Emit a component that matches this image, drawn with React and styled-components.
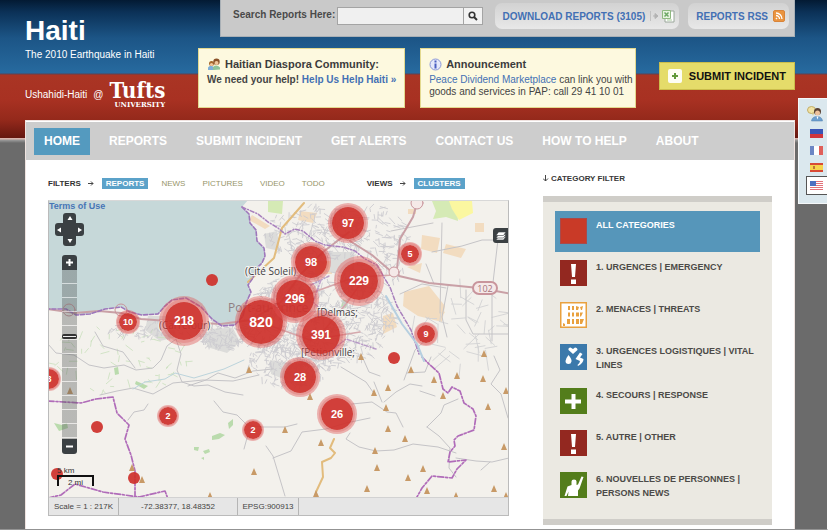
import React, { useState } from "react";
import styled, { createGlobalStyle } from "styled-components";

const GlobalStyle = createGlobalStyle`
  * { box-sizing: border-box; }
  body { margin: 0; font-family: "Liberation Sans", Arial, sans-serif; color: #3b3b3b; }
  button, input { font-family: inherit; }
  a { text-decoration: none; color: inherit; }
  h1, h2, p, ul { margin: 0; padding: 0; }
  ul { list-style: none; }
  svg { display: block; flex: none; }
`;

const Page = styled.div`
  position: relative;
  display: flex;
  flex-direction: column;
  min-height: 100vh;
  padding: 0 32px 0 25px;
  overflow: hidden;
  border-right: 1px solid #fff;
  border-bottom: 1px solid #939393;
  background:
    linear-gradient(#031a33 0, #0b3157 12px, #1c5586 38px, #276a9f 73px, #5c4152 74px, #aa3524 75px,
      #a83122 100px, #94291b 120px, #651710 138px, #d9b4ae 138px, #d9b4ae 139px, #9b9b9b 140px, #6b6b6b 143px);
`;

const Header = styled.header`
  display: flex;
  height: 120px;
`;

const Brand = styled.div`
  flex: 0 0 173px;
  padding-top: 15px;
  color: #fff;
`;

const Title = styled.h1`
  font-size: 28px;
  line-height: 32px;
`;

const Tagline = styled.p`
  font-size: 10px;
  line-height: 15px;
`;

const Partner = styled.div`
  display: flex;
  align-items: center;
  gap: 6px;
  margin-top: 17px;
  font-size: 10px;
`;

const Logo = styled.a`
  display: flex;
  flex-direction: column;
  align-items: flex-end;
  font-family: "DejaVu Serif Condensed", "DejaVu Serif", serif;
  font-weight: bold;
  font-size: 22px;
  line-height: 22px;
`;

const LogoSub = styled.span`
  font-family: "DejaVu Serif", serif;
  font-size: 7px;
  line-height: 8px;
`;

const HeaderSide = styled.div`
  flex: 1;
  min-width: 0;
`;

const Toolbar = styled.form`
  display: flex;
  align-items: flex-start;
  height: 37px;
  margin-left: 22px;
  padding: 3px 5px 0 12px;
  background: #c9c9c9;
  border: 1px solid #a9b0b6;
  border-top: 0;
`;

const SearchLabel = styled.label`
  margin-right: 2px;
  font-size: 10px;
  font-weight: bold;
  line-height: 24px;
  color: #4a4a4a;
  white-space: nowrap;
`;

const SearchInput = styled.input`
  flex: 1;
  min-width: 0;
  height: 18px;
  margin-top: 4px;
  padding: 0 4px;
  font-size: 10px;
  background: #f0f0f0;
  border: 1px solid #a4a4a4;
  border-radius: 0;
`;

const SearchButton = styled.button`
  display: grid;
  place-items: center;
  width: 20px;
  height: 18px;
  margin: 4px 12px 0 -1px;
  padding: 0;
  background: #f2f2f2;
  border: 1px solid #a4a4a4;
`;

const Pill = styled.a`
  display: flex;
  align-items: center;
  gap: 5px;
  height: 26px;
  padding: 0 4px 0 8px;
  font-size: 10px;
  font-weight: bold;
  color: #4370b4;
  white-space: nowrap;
  background: linear-gradient(#d2d2d2, #e8e8e8);
  border-radius: 7px;
  & + & { margin-left: 9px; }
`;

const Notices = styled.div`
  display: flex;
  align-items: flex-start;
  gap: 15px;
  margin-top: 11px;
`;

const Notice = styled.section`
  flex: ${(p) => p.$grow} 1 0;
  height: 60px;
  padding: 7px 0 0 8px;
  background: #fdf9df;
  border: 1px solid #e3d98f;
  font-size: 10px;
  line-height: 12px;
  color: #444;
  white-space: nowrap;
  font-weight: ${(p) => (p.$strong ? "bold" : "normal")};
  a { color: #4370b4; }
`;

const NoticeTitle = styled.h2`
  display: flex;
  align-items: center;
  gap: 4px;
  margin-bottom: 2px;
  font-size: 11px;
  line-height: 16px;
  color: #3c3c3c;
`;

const SubmitLink = styled.a`
  display: flex;
  align-items: center;
  gap: 7px;
  height: 28px;
  margin: 14px 0 0 8px;
  padding: 0 8px;
  font-size: 11px;
  font-weight: bold;
  color: #111;
  white-space: nowrap;
  background: #e5dc6a;
  border: 1px solid #cbbd4c;
`;

const Panel = styled.main`
  flex: 1;
  background: #fff;
  border: 1px solid #efe3e0;
  border-bottom: 0;
  padding-top: 1px;
`;

const Nav = styled.nav`
  display: flex;
  align-items: center;
  gap: 9px;
  height: 38px;
  padding-left: 8px;
  background: #cdcdcd;
`;

const NavItem = styled.a`
  padding: 0 10px;
  font-size: 12px;
  font-weight: bold;
  line-height: 27px;
  color: #fff;
  white-space: nowrap;
  background: ${(p) => (p.$active ? "#549abf" : "transparent")};
`;

const Columns = styled.div`
  display: grid;
  grid-template-columns: minmax(0, 1fr) 229px;
  gap: 34px;
  padding: 12px 22px 4px;
`;

const Filters = styled.div`
  display: flex;
  align-items: center;
  height: 22px;
  margin-bottom: 6px;
  font-size: 8px;
`;

const FilterLabel = styled.span`
  display: flex;
  align-items: center;
  gap: 7px;
  margin: 0 8px 0 ${(p) => (p.$spaced ? "29px" : "0")};
  font-weight: bold;
  color: #333;
`;

const FilterButton = styled.button`
  height: 11px;
  margin-right: 9px;
  padding: 0 4px;
  border: 0;
  font-size: 8px;
  line-height: 11px;
  font-weight: ${(p) => (p.$active ? "bold" : "normal")};
  color: ${(p) => (p.$active ? "#fff" : "#98966a")};
  background: ${(p) => (p.$active ? "#5ba2c9" : "transparent")};
`;

const MapBox = styled.section`
  border: 1px solid #bbb;
  border-top-color: #d8d8d8;
`;

const MapView = styled.div`
  position: relative;
  height: 296px;
  overflow: hidden;
  background: #f3f1ec;
`;

const Terms = styled.a`
  position: absolute;
  left: 0;
  top: 0;
  font-size: 9px;
  line-height: 10px;
  color: #4675b6;
  font-weight: bold;
`;

const Marker = styled.button`
  position: absolute;
  left: ${(p) => p.$x - 49 - p.$r}px;
  top: ${(p) => p.$y - 201 - p.$r}px;
  width: ${(p) => p.$r * 2}px;
  height: ${(p) => p.$r * 2}px;
  padding: 0;
  border: 0;
  border-radius: 50%;
  background: rgba(206, 48, 42, 0.92);
  box-shadow: 0 0 0 ${(p) => Math.ceil(p.$halo / 2)}px rgba(216, 70, 70, 0.25),
    0 0 0 ${(p) => p.$halo}px rgba(222, 80, 80, 0.4);
  font-size: ${(p) => (p.$r > 20 ? 14 : p.$r > 17 ? 12 : p.$r > 12 ? 11 : 9)}px;
  font-weight: bold;
  color: #fff;
`;

const Controls = styled.div`
  position: absolute;
  left: 6px;
  top: 12px;
  width: 29px;
  display: flex;
  flex-direction: column;
  align-items: center;
`;

const PanPad = styled.div`
  display: grid;
  grid-template-columns: 8px 13px 8px;
  grid-template-rows: 10px 13px 10px;
  margin-bottom: 9px;
`;

const PanButton = styled.button`
  display: grid;
  place-items: center;
  grid-area: ${(p) => p.$area};
  padding: 0;
  border: 0;
  background: #3b4043;
  border-radius: ${(p) => p.$radius};
`;

const PanCenter = styled.span`
  grid-area: 2 / 2;
  background: #3b4043;
`;

const ZoomButton = styled.button`
  display: grid;
  place-items: center;
  width: 15px;
  height: 15px;
  padding: 0;
  border: 0;
  color: #fff;
  background: #3b4043;
  border-radius: ${(p) => (p.$end ? "0 0 3px 3px" : "3px 3px 0 0")};
`;

const ZoomTrack = styled.div`
  width: 15px;
  height: 169px;
  padding-top: 64px;
  background: repeating-linear-gradient(rgba(80, 85, 85, 0.36) 0 13px, rgba(225, 225, 225, 0.6) 13px 14px);
`;

const ZoomHandle = styled.div`
  height: 5px;
  border: 1px solid #333;
  border-width: 2px 1px;
  border-radius: 2px;
  background: #eee;
`;

const LayerButton = styled.button`
  position: absolute;
  right: 0;
  top: 27px;
  display: grid;
  place-items: center;
  width: 15px;
  height: 15px;
  padding: 0;
  border: 0;
  border-radius: 3px 0 0 3px;
  background: #3b4043;
`;

const Scale = styled.div`
  position: absolute;
  left: 8px;
  bottom: 11px;
  width: 37px;
  font-size: 8px;
  line-height: 9px;
  color: #333;
`;

const ScaleBar = styled.div`
  height: 11px;
  padding-top: 1px;
  text-align: center;
  border: 2px solid #111;
  border-bottom: 0;
`;

const StatusBar = styled.footer`
  display: flex;
  height: 18px;
  border-top: 1px solid #d2d2d2;
  background: #e6e6e6;
  font-size: 8px;
  line-height: 18px;
  color: #444;
`;

const StatusCell = styled.span`
  flex: 0 0 ${(p) => p.$width}px;
  text-align: center;
  white-space: nowrap;
  border-right: 1px solid #b5b5b5;
`;

const CategoryTitle = styled.h2`
  height: 24px;
  display: flex;
  align-items: flex-start;
  gap: 2px;
  padding-top: 1px;
  font-size: 8px;
  line-height: 11px;
  color: #383838;
  svg { margin-top: 2px; }
`;

const CategoryList = styled.ul`
  display: flex;
  flex-direction: column;
  gap: 1px;
  padding: 9px 12px 11px;
  background: #ebe9e2;
  border: solid #cfcdc8;
  border-width: 6px 0;
`;

const CategoryButton = styled.button`
  display: flex;
  align-items: flex-start;
  gap: 9px;
  width: 100%;
  padding: 7px 5px 8px;
  border: 0;
  text-align: left;
  font-size: 9px;
  font-weight: bold;
  line-height: 14px;
  color: ${(p) => (p.$active ? "#fff" : "#4c4a47")};
  background: ${(p) => (p.$active ? "#5696ba" : "transparent")};
`;

const LanguageBar = styled.aside`
  position: absolute;
  right: 0;
  top: 98px;
  display: flex;
  flex-direction: column;
  align-items: flex-end;
  width: 29px;
  padding: 6px 0 8px;
  background: #dbe8ee;
  border: 1px solid #f5f8fa;
  border-right: 0;
`;

const LanguageIcon = styled.div`
  padding: 0 4px 3px 0;
`;

const Language = styled.button`
  display: flex;
  align-items: center;
  width: 21px;
  height: ${(p) => (p.$active ? 19 : 17)}px;
  padding: 0 0 0 3px;
  border: ${(p) => (p.$active ? "1px solid #555" : "1px solid transparent")};
  border-right: 0;
  background: ${(p) => (p.$active ? "#fff" : "transparent")};
`;

function seeded(seed) {
  let s = seed;
  return () => {
    s = (s * 16807) % 2147483647;
    return s / 2147483647;
  };
}

/* Short crossing street segments scattered inside an ellipse. */
function streets(seed, cx, cy, rx, ry, count, len) {
  const rnd = seeded(seed);
  let d = "";
  for (let i = 0; i < count; i++) {
    const a = rnd() * Math.PI * 2;
    const m = Math.sqrt(rnd());
    const x = cx + Math.cos(a) * rx * m;
    const y = cy + Math.sin(a) * ry * m;
    const t = 0.3 + (rnd() > 0.5 ? Math.PI / 2 : 0) + (rnd() - 0.5) * 1.2;
    const l = len * (0.4 + rnd());
    d += `M${x.toFixed(1)} ${y.toFixed(1)}l${(Math.cos(t) * l).toFixed(1)} ${(Math.sin(t) * l).toFixed(1)}`;
  }
  return d;
}

const URBAN = [
  streets(7, 318, 318, 76, 48, 820, 6),
  streets(19, 315, 232, 50, 28, 250, 6),
  streets(31, 290, 362, 42, 26, 220, 5),
  streets(43, 375, 245, 34, 42, 170, 6),
  streets(53, 222, 334, 26, 16, 140, 5),
  streets(61, 150, 328, 42, 9, 70, 5),
].join("");
const FIELDS = streets(77, 120, 358, 75, 34, 70, 6);
const EAST = streets(89, 460, 320, 48, 45, 46, 15);

const PEAKS = [
  [285, 430], [310, 397], [321, 443], [374, 393], [388, 388], [386, 408], [388, 429], [405, 439], [375, 451],
  [377, 468], [408, 478], [423, 469], [427, 491], [367, 489], [316, 494], [411, 370], [434, 380], [457, 376],
  [443, 396], [483, 379], [488, 407], [506, 391], [504, 447], [494, 489], [456, 496], [361, 357], [484, 354],
  [506, 496], [249, 370], [70, 391], [254, 472], [142, 480], [132, 468], [210, 496],
];

const MapSvg = styled.svg`
  font-family: "Open Sans", "Noto Sans", sans-serif;
`;

const COAST =
  "M242 207L249 214L250 223L256 230L257 241L264 248L265 256L262 263L255 270L253 278L248 285L251 292L246 303L243 316L235 325L222 326L212 319L201 307L186 298L172 300L164 307L158 314L142 315L130 312L121 307L105 309L90 314L76 315L66 309L48 309";

function MapArt() {
  return (
    <MapSvg width="459" height="296" viewBox="49 201 459 296" aria-hidden="true">
      <rect x="48" y="200" width="800" height="300" fill="#f3f1ec" />
      <path d={COAST + "V200H248L242 207Z"} fill="#c6d8d9" />
      <path d="M268 201H283L282 214L268 212Z M432 201H450L457 206L458 221L446 217L433 219L436 211Z" fill="#d5eab5" />
      <path d="M449 201H472L473 213L459 220L452 209Z" fill="#fbf7a0" />
      <path
        d="M252 215L270 226L265 229L249 220ZM300 211l17 2-4 10-15-3zM475 223h9v9h-9zM422 235l18 3-3 15-16-4zM446 244l20 5-5 9-18-5zM407 267l15-4-2 10zM404 292l25-6 16 20-3 16-24-6-15-10zM383 316l10-3 4 14-14 7zM440 309l5 3-5 8zM315 261h17v13h-17zM408 209h8v5h-8z"
        fill="#f2dcc0"
      />
      <g fill="#dcdcda">
        <path d="M148 316h22l7 21-17 4-15-11zM205 329l28-1 7 14-13 11-20-6zM264 234l13-3 3 20-14-3zM297 246l13 2-5 13-12-3zM330 252h24v20h-24zM270 360l30 4 14 14-18 6-25-10z" />
      </g>
      <g fill="#badbad">
        <path d="M212 436l8-3 5 2-6 4-7 1zM228 423l5-4 0 6-4 4zM194 447h5l-1 4-4-1zM203 451l6-2 1 3-5 2zM201 458l3-1v3zM54 423l8 2 5-2 1 5-9 3zM114 368l4-1 1 7-4 1zM136 381l12 5-4 3-9-5zM343 299l5 3-2 6-5-1z" />
      </g>
      <g fill="none" strokeLinecap="round" strokeLinejoin="round">
        <path d={FIELDS} stroke="#c9dfbc" strokeWidth="0.8" />
        <path d={URBAN} stroke="#cdccd0" strokeWidth="0.9" />
        <path d={EAST} stroke="#d3d2d4" strokeWidth="0.9" />
        <path
          stroke="#c5c4c7"
          strokeWidth="1"
          d="M48 344l8 9 18 2 15 10 15 3 20-3 12 5 17-2 8-8 6-14 9-7 5 15-4 16 5 12 12 4 14-1 17 7 18 3M95 332l8 14 20 6 12 16M188 386l18-6 12-7 17 5 18-7 20-2M100 395l17-4 16-3 20 6 20-11 30-3 30 1 26-6M128 420l6-8 10-2 4-6M214 401l9 11 14 3 10 10 15 2h23l12-3M285 496l-12-40-7-10M273 458l18-7 11-19 24-3 20-6 24-5M256 430l-9 8-3 11M352 404l20-2 15 10 9 1 7 14M375 395l-9-13-25-15M384 402l12-10 14-8 12 2M380 376l-11-4-8-18M382 402l-8-20M350 433l-4 6 13 8 17 4 18-1 19-6 25 3 18 6M427 427l14-14 3-8 14-6M427 427l12 9 11 12-1 20 7 9M456 458l20 3 16 1 17-4M481 470l9-8M420 391l15 5M407 373l18-1 6-15M494 356l6 14-9 14 10 10 7 24M432 252l30-6 20-6h27M434 284l-8-20M466 290v30l7 14h36M448 286l-6 31 5 20M499 231l-7 60v50M434 332l-19 18-11 30"
        />
        <path d="M442 223l-2 90M391 231l42-8M400 294l22-10 24 4" stroke="#c8c6c8" />
        <path d="M133 389l12-7 20-3 10-6 19 5 30-9 20-9" stroke="#bcd4dc" />
        <path d="M248 282l26-24 8-30 22-25M334 439l-4 9 5 5-4 5-9 4 1 15-7 15-2 10" stroke="#e2bc7d" strokeWidth="2" />
        <path
          stroke="#c9a0a6"
          strokeWidth="2"
          d="M48 309l27 4 24-2 22 2 20 6 40 3 40 2 30-4 30-18 20-28 22-22 26-20M350 241l22 14 21 18M417 203l-4 14-13 22-3 30 2 7 30 7 50 5 33 6"
        />
        <path d="M295 299l60-22 40-2M321 334l25-30 20-28M260 322l50 18 50-8" stroke="#d5a9ad" strokeWidth="1.6" />
        <path d={COAST} stroke="#9d76bb" strokeWidth="1.6" strokeDasharray="4 2" />
        <g stroke="#a880bd" strokeWidth="1.5" strokeDasharray="4 2 1 2">
          <path d="M242 207l16 7 10 8 10 6 7 6 10-5 8 2 12 10 10 4 18 2 12 4 10 8 12 6 8 14 5 8 7 19 14 24 8 24" />
          <path d="M293 297l12 2 6-14 18-9M321 280l-8 22 15 14 20-6M326 355l20-16 30 10" strokeOpacity=".7" />
        </g>
        <g stroke="#b06cb9" strokeWidth="1.7" strokeDasharray="6 2 2 2">
          <path d="M422 357l7 7 10 9 4 16 5 4 4-6 8 4 4 12 9 6 3 7-2 14-16 6-4 4 1 6-5 6-2 10 18-2-9 9-5 9-20-2-10 12-9 16 4 12" />
          <path d="M48 401l33 2 15-4 17-2 4 16 12 12-4 14 6 16 4 16v25M48 498l13-3 14-11 28 8 36 5 26-6 3 8" />
        </g>
        <path d="M386 296l16 28 15 20 7 17" stroke="#b6cfe0" strokeWidth="2" />
        <g stroke="#c9959c" fill="#f5e9e8">
          <circle cx="417" cy="203" r="6" />
          <circle cx="394" cy="272" r="5" />
          <circle cx="121" cy="310" r="6" fill="none" />
          <circle cx="69" cy="310" r="6" fill="none" />
          <rect x="473" y="282" width="24" height="12" rx="6" strokeWidth="2" />
        </g>
      </g>
      <path d={PEAKS.map(([x, y]) => `M${x} ${y - 4}l3 7h-6z`).join("")} fill="#c89a67" />
      <text x="485" y="292" fontSize="9" textAnchor="middle" fill="#a6747c">102</text>
      <text x="228" y="312" fontSize="12" fill="#8f7f83">Port-au-Prince</text>
      <g fill="#3f3c3f" fontSize="10" stroke="#f6f4f1" strokeWidth="2" paintOrder="stroke">
        <text x="245" y="275">(Cité Soleil)</text>
        <text x="317" y="316">[Delmas;</text>
        <text x="159" y="329">(Carrefour)</text>
        <text x="301" y="356">[Pétionville;</text>
      </g>
    </MapSvg>
  );
}

const MARKERS = [
  { x: 348, y: 223, r: 16, halo: 4, n: 97 },
  { x: 311, y: 262, r: 16, halo: 4, n: 98 },
  { x: 359, y: 281, r: 19, halo: 6, n: 229 },
  { x: 261, y: 322, r: 22, halo: 4, n: 820 },
  { x: 295, y: 299, r: 19, halo: 5, n: 296 },
  { x: 184, y: 321, r: 19, halo: 6, n: 218 },
  { x: 321, y: 335, r: 19, halo: 6, n: 391 },
  { x: 300, y: 377, r: 16, halo: 4, n: 28 },
  { x: 337, y: 414, r: 16, halo: 4, n: 26 },
  { x: 128, y: 322, r: 9, halo: 3, n: 10 },
  { x: 410, y: 254, r: 9, halo: 3, n: 5 },
  { x: 426, y: 334, r: 9, halo: 3, n: 9 },
  { x: 168, y: 416, r: 9, halo: 2, n: 2 },
  { x: 253, y: 430, r: 9, halo: 2, n: 2 },
  { x: 49, y: 379, r: 10, halo: 2, n: 8 },
  { x: 212, y: 280, r: 6, halo: 0 },
  { x: 394, y: 358, r: 6, halo: 0 },
  { x: 97, y: 427, r: 6, halo: 0 },
  { x: 57, y: 474, r: 6, halo: 0 },
  { x: 134, y: 478, r: 6, halo: 0 },
];

const PAN = [
  { name: "Pan up", area: "1 / 2", radius: "3px 3px 0 0", d: "M3 1L5.5 5H.5z" },
  { name: "Pan left", area: "2 / 1", radius: "3px 0 0 3px", d: "M1 3L5 .5V5.5z" },
  { name: "Pan right", area: "2 / 3", radius: "0 3px 3px 0", d: "M5 3L1 .5V5.5z" },
  { name: "Pan down", area: "3 / 2", radius: "0 0 3px 3px", d: "M3 5L5.5 1H.5z" },
];

function CategoryIcon({ kind }) {
  const fill = { all: "#c93a27", alert: "#932820", threat: "#fff", vital: "#3b79ab", plus: "#537d1b", person: "#537d1b" }[kind];
  return (
    <svg width="27" height="26" viewBox="0 0 27 26" aria-hidden="true">
      <rect width="27" height="26" fill={fill} />
      {kind === "all" && <rect x=".5" y=".5" width="26" height="25" fill="none" stroke="#a84a4b" />}
      {kind === "alert" && <path d="M11 4h5l-1 13h-3zM11 19.5h5V24h-5z" fill="#fff" />}
      {kind === "plus" && <path d="M11.5 6h4v5.500H21v4h-5.500V21h-4v-5.500H5v-4h6.500z" fill="#fff" />}
      {kind === "threat" && (
        <>
          <rect x=".75" y=".75" width="25.500" height="24.500" fill="none" stroke="#e9a13f" strokeWidth="1.500" />
          <path
            d="M8 4h2v4H8zM12 4h2v4h-2zM16 4l3 1-1 3h-2zM20 5l3-1-1 4h-1zM8 10.500h2v4H8zM12 10.500h2v4h-2zM16 10.500h3v4h-3zM20 10.500h3l-2 4h-1zM7 17h3v5H7zM12 17h2v5h-2zM16 17h3v5h-3zM20 17h4l-2 5h-2zM3 21l2 1v2H3z"
            fill="#e9a13f"
          />
        </>
      )}
      {kind === "vital" && (
        <path
          d="M13 10L8.500 6Q8 3.500 10.500 3.500L13 5L15 3.500Q17.500 3.500 17.500 6ZM8.500 11Q12 15 11.500 17.500Q11 20 8.500 20Q5.500 20 5.500 17Q6 14 8.500 11ZM20 8.500l2.500 1.500-2.500 3.500 3.500 1.500q0 4-5.500 7l-.5-1q2.500-2 2.500-4l-4.500-2z"
          fill="#fff"
        />
      )}
      {kind === "person" && (
        <path
          d="M11.500 13V9.500Q11.500 7.500 14 7.500T16.500 9.500V13L18 12.500L21.500 4.500L23.500 5L19.500 16.500L18 18.500V24H8L8.500 19.500L6.500 24H4.500L7.500 14.500Z"
          fill="#fff"
        />
      )}
    </svg>
  );
}

const CATEGORIES = [
  ["all", "ALL CATEGORIES"],
  ["alert", "1. URGENCES | EMERGENCY"],
  ["threat", "2. MENACES | THREATS"],
  ["vital", "3. URGENCES LOGISTIQUES | VITAL LINES"],
  ["plus", "4. SECOURS | RESPONSE"],
  ["alert", "5. AUTRE | OTHER"],
  ["person", "6. NOUVELLES DE PERSONNES | PERSONS NEWS"],
];

const FLAGS = [
  ["Kreyòl", <><path fill="#3a55b5" d="M0 0h13v5H0z" /><path fill="#d0353c" d="M0 5h13v4H0z" /></>],
  ["Français", <><path fill="#fff" d="M0 0h13v9H0z" /><path fill="#6c86c4" d="M0 0h4v9H0z" /><path fill="#e0605a" d="M9 0h4v9H9z" /></>],
  ["Español", <><path fill="#d84a35" d="M0 0h13v9H0z" /><path fill="#f6d44c" d="M0 2h13v5H0z" /><path fill="#c07438" d="M3 3h2v3H3z" /></>],
  ["English", <><path fill="#fff" d="M0 0h13v9H0z" /><path fill="#e2717a" d="M0 0h13v1H0zM0 2h13v1H0zM0 4h13v1H0zM0 6h13v1H0zM0 8h13v1H0z" /><path fill="#4c6fc0" d="M0 0h6v5H0z" /></>],
];

function Arrow({ down }) {
  return (
    <svg width="6" height="7" viewBox="0 0 6 7" fill="none" stroke="#444" aria-hidden="true">
      {down ? <path d="M2.500 0v6M0 3.500l2.500 2.500 2.500-2.500" /> : <path d="M0 3.500h5M3 1.500l2 2-2 2" />}
    </svg>
  );
}

export default function App() {
  const [category, setCategory] = useState(0);
  const [filter, setFilter] = useState("REPORTS");
  const [language, setLanguage] = useState("English");

  return (
    <>
      <GlobalStyle />
      <Page>
        <Header>
          <Brand>
            <Title>Haiti</Title>
            <Tagline>The 2010 Earthquake in Haiti</Tagline>
            <Partner>
              <span>Ushahidi-Haiti</span>
              <span>@</span>
              <Logo href="#tufts">
                Tufts
                <LogoSub>UNIVERSITY</LogoSub>
              </Logo>
            </Partner>
          </Brand>
          <HeaderSide>
            <Toolbar onSubmit={(e) => e.preventDefault()}>
              <SearchLabel htmlFor="search">Search Reports Here:</SearchLabel>
              <SearchInput id="search" type="text" />
              <SearchButton type="submit" aria-label="Search">
                <svg width="10" height="10" viewBox="0 0 10 10" fill="none" stroke="#333" aria-hidden="true">
                  <circle cx="4" cy="4" r="2.800" strokeWidth="1.600" />
                  <path d="M6 6l3 3" strokeWidth="2" />
                </svg>
              </SearchButton>
              <Pill href="#download">
                DOWNLOAD REPORTS (3105)
                <svg width="25" height="14" viewBox="0 0 25 14" aria-hidden="true">
                  <path d="M.5 2v10" stroke="#c2c2c2" />
                  <path d="M3 7h3M5 4.500L8 7l-3 2.500z" stroke="#b3b3b3" fill="#b3b3b3" />
                  <path d="M15 2h9v11h-9z" fill="#fff" stroke="#9aa79a" />
                  <path d="M12.500 1.500h8v8h-8z" fill="#e6f3df" stroke="#8fb981" />
                  <path d="M14.500 3.500l4 4M18.500 3.500l-4 4" stroke="#6da765" strokeWidth="1.500" />
                  <path d="M17 11h5" stroke="#a8cc9b" />
                </svg>
              </Pill>
              <Pill href="#rss">
                REPORTS RSS
                <svg width="12" height="12" viewBox="0 0 12 12" fill="none" stroke="#fff" strokeWidth="1.300" aria-hidden="true">
                  <rect x=".5" y=".5" width="11" height="11" rx="1.500" fill="#ea9440" stroke="#d8843a" strokeWidth="1" />
                  <path d="M3 5.500a3.500 3.500 0 0 1 3.500 3.500M3 3a6 6 0 0 1 6 6" />
                  <circle cx="3.500" cy="8.500" r=".6" fill="#fff" strokeWidth=".5" />
                </svg>
              </Pill>
            </Toolbar>
            <Notices>
              <Notice $grow={207} $strong>
                <NoticeTitle>
                  <svg width="14" height="13" viewBox="0 0 14 13" aria-hidden="true">
                    <path d="M1 12V9.500Q3 6.500 6 8.500L7 12z" fill="#7faed8" />
                    <path d="M6 12V9Q9.500 6 13 9.500V11.500L7 12z" fill="#8fc49b" />
                    <circle cx="4.500" cy="5.500" r="2.500" fill="#a5672d" />
                    <circle cx="4.500" cy="6.500" r="1.600" fill="#f1c79c" />
                    <circle cx="9.500" cy="3.800" r="3.200" fill="#8b5228" />
                    <circle cx="9.500" cy="5" r="2" fill="#f1c79c" />
                  </svg>
                  Haitian Diaspora Community:
                </NoticeTitle>
                <p>We need your help! <a href="#help">Help Us Help Haiti »</a></p>
              </Notice>
              <Notice $grow={216}>
                <NoticeTitle>
                  <svg width="13" height="13" viewBox="0 0 13 13" aria-hidden="true">
                    <circle cx="6.500" cy="6.500" r="5.500" fill="#e6e9fa" stroke="#8b98d8" />
                    <path d="M5.500 2.500h2v2h-2zM5.500 5.500h2v5h-2z" fill="#4a5fc0" />
                  </svg>
                  Announcement
                </NoticeTitle>
                <p><a href="#market">Peace Dividend Marketplace</a> can link you with</p>
                <p>goods and services in PAP: call 29 41 10 01</p>
              </Notice>
              <SubmitLink href="#submit">
                <svg width="14" height="14" viewBox="0 0 14 14" aria-hidden="true">
                  <rect width="14" height="14" rx="2" fill="#fdfdf4" />
                  <path d="M7 4v6M4 7h6" stroke="#62993a" strokeWidth="2" />
                </svg>
                SUBMIT INCIDENT
              </SubmitLink>
            </Notices>
          </HeaderSide>
        </Header>

        <Panel>
          <Nav>
            {["HOME", "REPORTS", "SUBMIT INCIDENT", "GET ALERTS", "CONTACT US", "HOW TO HELP", "ABOUT"].map((t, i) => (
              <NavItem key={t} href={"#nav-" + i} $active={i === 0}>{t}</NavItem>
            ))}
          </Nav>
          <Columns>
            <div>
              <Filters>
                <FilterLabel>FILTERS <Arrow /></FilterLabel>
                {["REPORTS", "NEWS", "PICTURES", "VIDEO", "TODO"].map((t) => (
                  <FilterButton key={t} $active={t === filter} onClick={() => setFilter(t)}>{t}</FilterButton>
                ))}
                <FilterLabel $spaced>VIEWS <Arrow /></FilterLabel>
                <FilterButton $active>CLUSTERS</FilterButton>
              </Filters>
              <MapBox>
                <MapView>
                  <MapArt />
                  {MARKERS.map((m, i) => (
                    <Marker key={i} $x={m.x} $y={m.y} $r={m.r} $halo={m.halo} aria-label={`${m.n || 1} reports`}>
                      {m.n}
                    </Marker>
                  ))}
                  <Terms href="#terms">Terms of Use</Terms>
                  <Controls>
                    <PanPad>
                      {PAN.map((p) => (
                        <PanButton key={p.name} aria-label={p.name} $area={p.area} $radius={p.radius}>
                          <svg width="6" height="6" viewBox="0 0 6 6" aria-hidden="true"><path d={p.d} fill="#fff" /></svg>
                        </PanButton>
                      ))}
                      <PanCenter />
                    </PanPad>
                    <ZoomButton aria-label="Zoom in">
                      <svg width="7" height="7" viewBox="0 0 7 7" stroke="#fff" strokeWidth="2" aria-hidden="true"><path d="M3.500 0v7M0 3.500h7" /></svg>
                    </ZoomButton>
                    <ZoomTrack><ZoomHandle /></ZoomTrack>
                    <ZoomButton $end aria-label="Zoom out">
                      <svg width="7" height="7" viewBox="0 0 7 7" stroke="#fff" strokeWidth="2" aria-hidden="true"><path d="M0 3.500h7" /></svg>
                    </ZoomButton>
                  </Controls>
                  <LayerButton aria-label="Layers">
                    <svg width="10" height="10" viewBox="0 0 10 10" fill="#fff" stroke="#3b4043" strokeWidth=".6" aria-hidden="true">
                      <path d="M2.500 5.500H10L7.500 9H0z" />
                      <path d="M2.500 3.500H10L7.500 7H0z" />
                      <path d="M2.500 1H10L7.500 4.500H0z" />
                    </svg>
                  </LayerButton>
                  <Scale>
                    5 km
                    <ScaleBar>2 mi</ScaleBar>
                  </Scale>
                </MapView>
                <StatusBar>
                  <StatusCell $width={70}>Scale = 1 : 217K</StatusCell>
                  <StatusCell $width={119}>-72.38377, 18.48352</StatusCell>
                  <StatusCell $width={61}>EPSG:900913</StatusCell>
                </StatusBar>
              </MapBox>
            </div>
            <div>
              <CategoryTitle><Arrow down />CATEGORY FILTER</CategoryTitle>
              <CategoryList>
                {CATEGORIES.map(([kind, label], i) => (
                  <li key={label}>
                    <CategoryButton $active={i === category} onClick={() => setCategory(i)}>
                      <CategoryIcon kind={kind} />
                      <span>{label}</span>
                    </CategoryButton>
                  </li>
                ))}
              </CategoryList>
            </div>
          </Columns>
        </Panel>

        <LanguageBar>
          <LanguageIcon>
            <svg width="16" height="17" viewBox="0 0 16 17" aria-hidden="true">
              <ellipse cx="4.500" cy="5" rx="4" ry="3.500" fill="#f0e2a4" stroke="#c2ae68" />
              <path d="M5 8l1 3 1-3z" fill="#d9c681" />
              <path d="M4.500 16Q5 11.500 10 11.500T15.500 16z" fill="#6d9fce" stroke="#4f7fae" strokeWidth=".5" />
              <circle cx="10.500" cy="6.500" r="3.500" fill="#5a4234" />
              <circle cx="10.500" cy="8" r="2.500" fill="#edc19c" />
              <path d="M9.500 11.500h2l-1 3z" fill="#fff" />
            </svg>
          </LanguageIcon>
          {FLAGS.map(([name, art]) => (
            <Language key={name} aria-label={name} $active={name === language} onClick={() => setLanguage(name)}>
              <svg width="13" height="9" viewBox="0 0 13 9" aria-hidden="true">{art}</svg>
            </Language>
          ))}
        </LanguageBar>
      </Page>
    </>
  );
}
